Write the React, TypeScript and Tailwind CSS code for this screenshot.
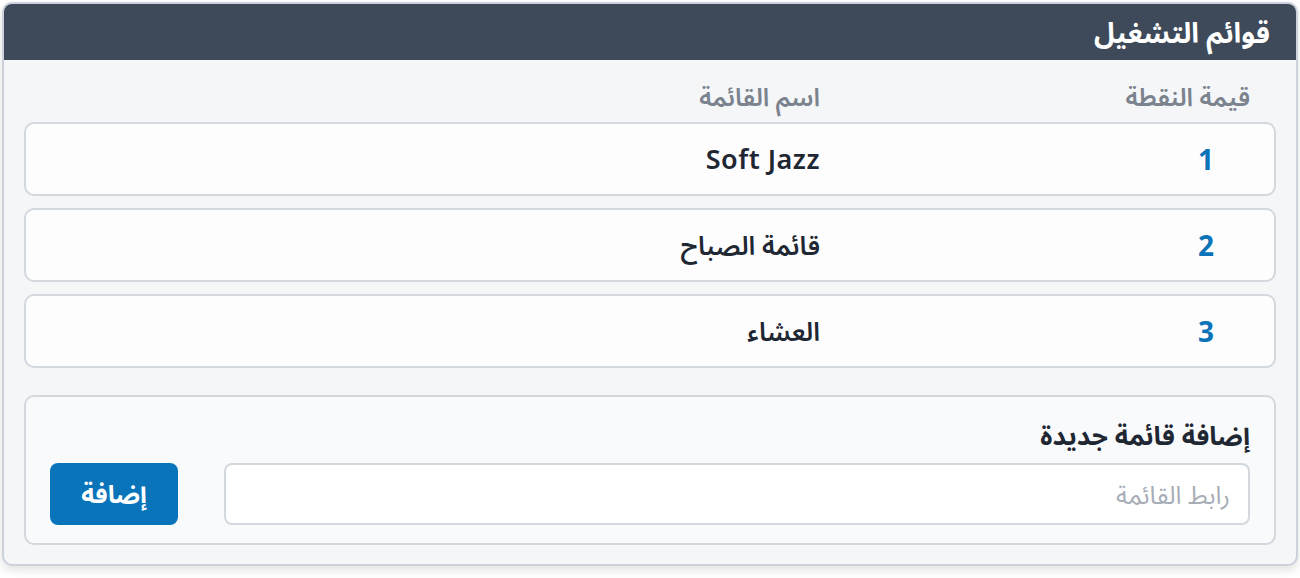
import React from "react";

const rows = [
  { n: 1, name: "Soft Jazz", latin: true },
  { n: 2, name: "قائمة الصباح", latin: false },
  { n: 3, name: "العشاء", latin: false },
];

export default function App() {
  return (
    <div
      dir="rtl"
      className="w-[1300px] h-[578px] bg-white p-[2px]"
      style={{ fontFamily: '"Noto Sans", "Noto Sans Arabic", "DejaVu Sans", sans-serif' }}
    >
      <div className="rounded-[10px] border-2 border-[#cbd2dc] bg-[#f4f6f8] overflow-hidden shadow-[0_4px_10px_rgba(0,0,0,0.12)] h-[564px]">
        <div className="h-[56px] bg-[#3e4a59] flex items-center pr-[26px]">
          <h1 className="text-white text-[28px] font-bold leading-none">قوائم التشغيل</h1>
        </div>
        <div className="px-[20px] pt-[17px]">
          <div className="flex items-center h-[40px] pr-[26px] text-[#7b838f] text-[25px] font-semibold">
            <div className="w-[430px]">قيمة النقطة</div>
            <div>اسم القائمة</div>
          </div>
          <div className="mt-[5px] flex flex-col gap-[12px]">
            {rows.map((r) => (
              <div
                key={r.n}
                className="h-[74px] rounded-[10px] border-2 border-[#d3d8df] bg-[#fdfdfe] flex items-center pr-[24px]"
              >
                <div className="w-[430px] flex">
                  <span className="w-[88px] text-center text-[#0b73b8] text-[28px] font-bold">{r.n}</span>
                </div>
                <div
                  className={
                    r.latin
                      ? "text-[#1f2733] text-[27px] font-semibold tracking-[0.5px]"
                      : "text-[#1f2733] text-[26px] font-semibold"
                  }
                >
                  {r.name}
                </div>
              </div>
            ))}
          </div>
          <div className="mt-[27px] h-[150px] rounded-[10px] border-2 border-[#d3d8df] bg-[#f9fafc] px-[24px] pt-[18px]">
            <div className="text-[#1f2733] text-[26px] font-bold leading-[40px]">إضافة قائمة جديدة</div>
            <div className="mt-[8px] flex items-center justify-between gap-[46px]">
              <input
                className="flex-1 h-[62px] rounded-[8px] border-2 border-[#d3d8df] bg-white px-[18px] text-[25px] outline-none placeholder:text-[#a7adb6]"
                placeholder="رابط القائمة"
              />
              <button className="w-[128px] h-[62px] rounded-[8px] bg-[#0a74bb] text-white text-[25px] font-bold">
                إضافة
              </button>
            </div>
          </div>
        </div>
      </div>
    </div>
  );
}
